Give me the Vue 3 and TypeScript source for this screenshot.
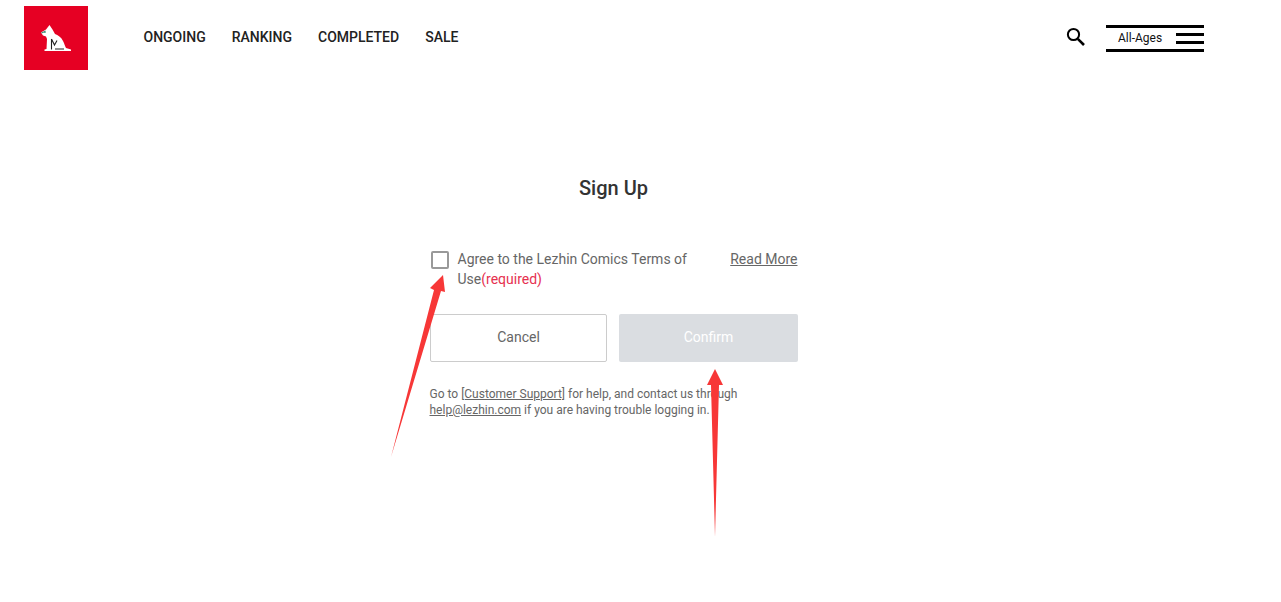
<template>
  <div class="page">
    <header class="top">
      <a class="logo" href="#">
        <svg width="32" height="28" viewBox="0 0 32 28">
          <path d="M1 8.5 L6 5.5 L9.5 1 L12.5 5.5 L15 10 C18 11 21 13 23 17 C24.5 20 25 22 26 24 L31 25.5 L31 27 L4.5 27 L4.5 25.5 L6.5 25 L7 15 L6 12.5 L3 11.5 Z" fill="#fff" />
          <path d="M1.5 9 L5 7.5 L5 9" fill="none" stroke="#3f8a74" stroke-width="1.2" />
          <path d="M11.5 15 L11.5 25.5 M11.5 15 L14.5 21 L17 16.5 M15 25 L24 25" fill="none" stroke="#222" stroke-width="1.1" />
        </svg>
      </a>
      <nav class="nav">
        <a v-for="item in navItems" :key="item" href="#">{{ item }}</a>
      </nav>
      <div class="top-right">
        <svg class="search" width="24" height="24" viewBox="0 0 24 24">
          <circle cx="9.5" cy="9.5" r="5.6" fill="none" stroke="#000" stroke-width="2" />
          <path d="M13.8 13.8 L20 20" stroke="#000" stroke-width="2.6" />
        </svg>
        <div class="age">
          <span>All-Ages</span>
          <div class="burger"><i /><i /></div>
        </div>
      </div>
    </header>

    <main class="wrap">
      <section class="signup">
        <h1>Sign Up</h1>
        <div class="terms">
          <span class="box" />
          <p>Agree to the Lezhin Comics Terms of Use<em>(required)</em></p>
          <a href="#">Read More</a>
        </div>
        <div class="btns">
          <button type="button" class="cancel">Cancel</button>
          <button type="button" class="confirm" disabled>Confirm</button>
        </div>
        <p class="help">
          Go to <a href="#">[Customer Support]</a> for help, and contact us through
          <a href="#">help@lezhin.com</a> if you are having trouble logging in.
        </p>
      </section>
    </main>

    <!-- annotation arrows drawn on top of the page -->
    <svg class="arrows" width="1281" height="602" viewBox="0 0 1281 602">
      <path d="M391 457 L434 290 L430 288 L443 275 L445 292 L441 291 Z" fill="#f73737" />
      <path d="M715 537 L711 385 L707 385 L715 369 L723 385 L719 385 Z" fill="#f73737" />
    </svg>
  </div>
</template>

<script setup lang="ts">
const navItems: string[] = ['ONGOING', 'RANKING', 'COMPLETED', 'SALE']
</script>

<style>
body { background: #fff; }
</style>

<style scoped>
.page { position: relative; height: 602px; overflow: hidden; font-family: Roboto, "Liberation Sans", sans-serif; }
a { color: inherit; }

.top { display: flex; align-items: center; width: 1180px; height: 64px; padding: 6px 0 0 24px; }
.logo { display: flex; align-items: center; justify-content: center; width: 64px; height: 64px; background: #e60023; flex: none; }
.nav { display: flex; gap: 26px; margin-left: 55.5px; margin-top: -2px; }
.nav a { font-size: 14px; font-weight: 500; color: #222; text-decoration: none; }
.top-right { display: flex; align-items: center; margin-left: auto; margin-top: 1px; }
.search { margin-right: 18px; margin-top: -3px; }
.age { display: flex; align-items: center; justify-content: space-between; width: 98px; height: 21px; border-top: 3px solid #000; border-bottom: 3px solid #000; }
.age span { font-size: 12px; color: #111; margin: -1px 0 0 12px; }
.burger { display: flex; flex-direction: column; gap: 5px; }
.burger i { display: block; width: 28px; height: 3px; background: #000; }

.wrap { display: flex; justify-content: center; width: 1228px; }
.signup { width: 368px; }
h1 { margin: 104px 0 0 -1px; font-size: 20px; line-height: 28px; font-weight: 500; text-align: center; color: #333; }
.terms { display: flex; align-items: flex-start; margin-top: 47px; font-size: 14px; line-height: 20px; color: #666; }
.box { flex: none; width: 14px; height: 14px; margin: 2px 8.5px 0 1px; border: 2px solid #999; border-radius: 2px; }
.terms p { margin: 0; width: 250px; }
.terms em { font-style: normal; color: #e6304f; }
.terms a { margin: 0 0.5px 0 auto; }
.btns { display: flex; gap: 12px; margin-top: 25px; }
button { height: 48px; font: 14px Roboto, "Liberation Sans", sans-serif; border-radius: 2px; padding: 0 0 2px; }
.cancel { width: 177px; background: #fff; color: #666; border: 1px solid #ccc; }
.confirm { width: 179px; background: #dadde1; color: #fff; border: 0; }
.help { margin: 24px 0 0 -0.5px; font-size: 12px; line-height: 16px; color: #666; }
.arrows { position: absolute; left: 0; top: 0; pointer-events: none; }
</style>
